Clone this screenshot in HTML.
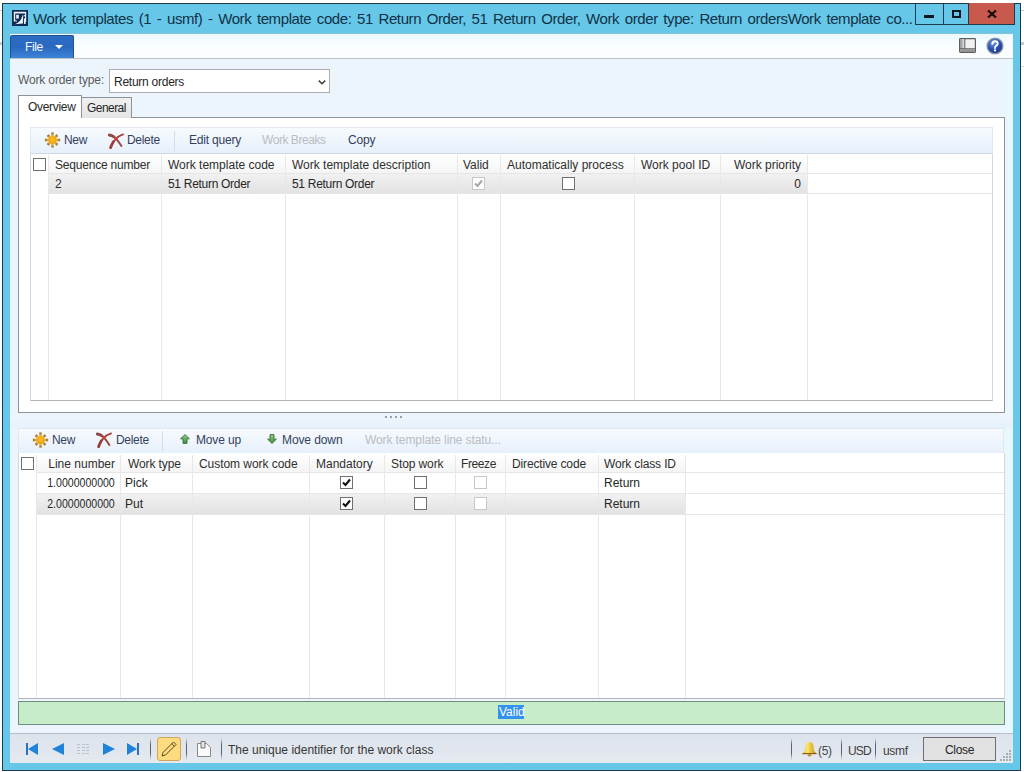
<!DOCTYPE html>
<html><head><meta charset="utf-8">
<style>
*{box-sizing:border-box;margin:0;padding:0}
html,body{width:1024px;height:772px;overflow:hidden;background:#fff;font-family:"Liberation Sans",sans-serif;font-size:12px;color:#1e1e1e}
.a{position:absolute}
.t{position:absolute;white-space:nowrap}
</style></head><body>
<svg width="0" height="0" style="position:absolute"><defs><radialGradient id="sg" cx="0.5" cy="0.45" r="0.6"><stop offset="0" stop-color="#ffc21e"/><stop offset="0.7" stop-color="#f2a818"/><stop offset="1" stop-color="#d89a30"/></radialGradient></defs></svg><div class="a" style="left:0px;top:10px;width:2px;height:1px;background:#c4c4c4"></div><div class="a" style="left:0px;top:42px;width:2px;height:3px;background:#c8c8c8"></div><div class="a" style="left:1021px;top:10px;width:3px;height:1px;background:#c4c4c4"></div><div class="a" style="left:1021px;top:42px;width:3px;height:3px;background:#c8c8c8"></div><div class="a" style="left:1021px;top:66px;width:3px;height:1px;background:#d8d8d8"></div><div class="a" style="left:2px;top:3px;width:1019px;height:768px;background:#67c7e8;border:1px solid #1b3b4c"></div><svg class="a" style="left:12px;top:10px" width="16" height="16" viewBox="0 0 16 16"><rect width="16" height="16" fill="#0b2b55"/><path d="M1.8 1.8H14.2V12H13V3.4H3.2V10.4H5V11.6H1.8Z" fill="#e9f0f9"/><rect x="4.2" y="4.8" width="2.6" height="3.8" fill="#eef4fb"/><path d="M2.8 14.2 Q8.6 12.6 10.6 5.2 L11.2 5.2 L11 13.6Z" fill="#e9f0f9"/><rect x="11.8" y="5" width="1" height="1.4" fill="#e9f0f9"/><rect x="12" y="8.4" width="1.6" height="5.6" fill="#e9f0f9"/></svg><div class="t" style="left:33px;top:10px;font-size:15px;line-height:18px;color:#0f3247;letter-spacing:-0.4px;word-spacing:1.8px">Work templates (1 - usmf) - Work template code: 51 Return Order, 51 Return Order, Work order type: Return ordersWork template co...</div><div class="a" style="left:915px;top:3px;width:29px;height:22px;border:1px solid #1b3b4c;border-top:none"></div><div class="a" style="left:943px;top:3px;width:26px;height:22px;border:1px solid #1b3b4c;border-top:none"></div><div class="a" style="left:968px;top:3px;width:47px;height:22px;background:#c75a4c;border:1px solid #1b3b4c;border-top:none"></div><div class="a" style="left:924px;top:15px;width:10px;height:3px;background:#0b1820"></div><div class="a" style="left:952px;top:10px;width:9px;height:8px;border:2px solid #0b1820"></div><svg class="a" style="left:987px;top:10px" width="10" height="8" viewBox="0 0 10 8"><path d="M1 0.5 L9 7.5 M9 0.5 L1 7.5" stroke="#1a0705" stroke-width="2.2"/></svg><div class="a" style="left:10px;top:33px;width:1003px;height:1px;background:#86c3da"></div><div class="a" style="left:10px;top:34px;width:1003px;height:25px;background:linear-gradient(#ebf9fd,#f9fdff 40%,#fbfdff);border-bottom:1px solid #bfc3c7"></div><div class="a" style="left:10px;top:35px;width:64px;height:23px;background:linear-gradient(#2c6cc3,#2a68c0 50%,#3d83d6);border:1px solid #24538f;border-bottom:none;border-radius:2px 2px 0 0"></div><div class="t" style="left:25px;top:40px;font-size:12px;line-height:14px;color:#f4f8ff;letter-spacing:-0.4px;">File</div><div class="a" style="left:55px;top:45px;width:0;height:0;border-left:4px solid transparent;border-right:4px solid transparent;border-top:4px solid #fff"></div><svg class="a" style="left:959px;top:38px" width="17" height="15" viewBox="0 0 17 15"><defs><linearGradient id="pg" x1="0" y1="0" x2="1" y2="0"><stop offset="0" stop-color="#8a8a8a"/><stop offset="1" stop-color="#eeeeee"/></linearGradient><linearGradient id="pg2" x1="0" y1="0" x2="0" y2="1"><stop offset="0" stop-color="#bdbdbd"/><stop offset="1" stop-color="#7a7a7a"/></linearGradient></defs><rect x="0.6" y="0.6" width="15.8" height="13.8" rx="0.8" fill="#f1f1f1" stroke="#5e5e5e" stroke-width="1.2"/><rect x="1.2" y="1.2" width="4.3" height="9.8" fill="url(#pg)"/><rect x="1.2" y="11" width="14.6" height="2.8" fill="url(#pg2)"/><path d="M5.8 1V11M1 10.8H16" stroke="#5a5a5a" stroke-width="1"/></svg><svg class="a" style="left:986px;top:37px" width="18" height="18" viewBox="0 0 18 18"><defs><radialGradient id="hg" cx="0.4" cy="0.3" r="0.75"><stop offset="0" stop-color="#6f9ae0"/><stop offset="0.55" stop-color="#2a4fae"/><stop offset="1" stop-color="#1a3585"/></radialGradient></defs><circle cx="9" cy="9" r="7.9" fill="url(#hg)" stroke="#8b96a6" stroke-width="1.4"/><path d="M6.3 6.9 Q6.3 4.3 9 4.3 Q11.7 4.3 11.7 6.6 Q11.7 8 10.2 8.8 Q9 9.5 9 11" fill="none" stroke="#fff" stroke-width="1.9" stroke-linecap="round"/><circle cx="9" cy="13.4" r="1.15" fill="#fff"/></svg><div class="a" style="left:10px;top:59px;width:1003px;height:704px;background:linear-gradient(90deg,#e6f7fd,#ecf5fc 4px,#ecf5fc 990px,#e4fafe)"></div><div class="t" style="left:18px;top:73px;font-size:12px;line-height:14px;color:#5b5b5b;letter-spacing:-0.15px;">Work order type:</div><div class="a" style="left:109px;top:69px;width:221px;height:24px;background:#fff;border:1px solid #abadb3"></div><div class="t" style="left:114px;top:75px;font-size:12px;line-height:14px;color:#262626;letter-spacing:-0.25px;">Return orders</div><svg class="a" style="left:317px;top:79px" width="10" height="7" viewBox="0 0 10 7"><path d="M1.8 1.6 L5 4.8 L8.2 1.6" fill="none" stroke="#404040" stroke-width="1.5"/></svg><div class="a" style="left:18px;top:117px;width:987px;height:296px;background:#fff;border:1px solid #8e9296"></div><div class="a" style="left:81px;top:97px;width:51px;height:21px;background:linear-gradient(#f0f0f0,#e4e4e4);border:1px solid #8e9296;border-bottom:none"></div><div class="t" style="left:87px;top:101px;font-size:12px;line-height:14px;color:#262626;letter-spacing:-0.55px;">General</div><div class="a" style="left:18px;top:95px;width:64px;height:23px;background:#fff;border:1px solid #8e9296;border-bottom:none"></div><div class="t" style="left:28px;top:100px;font-size:12px;line-height:14px;color:#262626;letter-spacing:-0.3px;">Overview</div><div class="a" style="left:30px;top:127px;width:963px;height:27px;background:linear-gradient(#f7fafe,#e6f0fb);border:1px solid #e2e8ef;border-bottom:1px solid #cfd9e4"></div><svg class="a" style="left:44px;top:132px" width="17" height="16" viewBox="0 0 17 16"><path d="M11.90 8.00L16.10 8.00M10.90 10.40L13.38 12.88M8.50 11.40L8.50 15.60M6.10 10.40L3.62 12.88M5.10 8.00L0.90 8.00M6.10 5.60L3.62 3.12M8.50 4.60L8.50 0.40M10.90 5.60L13.38 3.12" stroke="#e0a830" stroke-width="2.3"/><path d="M14.30 8.00L16.10 8.00M12.11 11.61L13.38 12.88M8.50 13.80L8.50 15.60M4.89 11.61L3.62 12.88M2.70 8.00L0.90 8.00M4.89 4.39L3.62 3.12M8.50 2.20L8.50 0.40M12.11 4.39L13.38 3.12" stroke="#a08050" stroke-width="2.3"/><circle cx="8.5" cy="8" r="4.0" fill="url(#sg)"/></svg><div class="t" style="left:64px;top:133px;font-size:12px;line-height:14px;color:#343f5e;letter-spacing:-0.3px;">New</div><svg class="a" style="left:108px;top:133px" width="16" height="16" viewBox="0 0 16 16"><g fill="none" stroke-linecap="round"><path d="M1.2 2 Q5.5 3 8 5.6 Q11 9 13.4 13" stroke="#9a4440" stroke-width="1.9"/><path d="M1.2 2 Q4 2.4 6 3.8" stroke="#8e4a48" stroke-width="2.8"/><path d="M15 1.4 Q10.5 3.2 8 5.6 Q4.2 9.6 2.6 14.6" stroke="#a8403a" stroke-width="1.8"/><path d="M5.4 8.6 Q3.6 11.6 2.6 14.6" stroke="#9c3c3a" stroke-width="2.8"/></g><circle cx="8" cy="5.7" r="1.6" fill="#d2402a"/></svg><div class="t" style="left:127px;top:133px;font-size:12px;line-height:14px;color:#343f5e;letter-spacing:-0.3px;">Delete</div><div class="a" style="left:174px;top:131px;width:1px;height:20px;background:#d5dde7"></div><div class="t" style="left:189px;top:133px;font-size:12px;line-height:14px;color:#343f5e;letter-spacing:-0.2px;">Edit query</div><div class="t" style="left:262px;top:133px;font-size:12px;line-height:14px;color:#b9bcc2;letter-spacing:-0.45px;">Work Breaks</div><div class="t" style="left:348px;top:133px;font-size:12px;line-height:14px;color:#343f5e;letter-spacing:-0.2px;">Copy</div><div class="a" style="left:30px;top:154px;width:963px;height:247px;background:#fff;border:1px solid #d6d9dc;border-bottom-color:#b2b5b9;border-top:none"></div><div class="a" style="left:48px;top:155px;width:759px;height:19px;background:linear-gradient(#ffffff,#f4f4f4)"></div><div class="a" style="left:48px;top:174px;width:759px;height:20px;background:linear-gradient(#f1f1f1,#e2e2e2)"></div><div class="a" style="left:48px;top:173px;width:944px;height:1px;background:#e6e6e6"></div><div class="a" style="left:48px;top:193px;width:944px;height:1px;background:#e6e6e6"></div><div class="a" style="left:48px;top:155px;width:1px;height:245px;background:#e8e8e8"></div><div class="a" style="left:161px;top:155px;width:1px;height:245px;background:#e8e8e8"></div><div class="a" style="left:285px;top:155px;width:1px;height:245px;background:#e8e8e8"></div><div class="a" style="left:457px;top:155px;width:1px;height:245px;background:#e8e8e8"></div><div class="a" style="left:500px;top:155px;width:1px;height:245px;background:#e8e8e8"></div><div class="a" style="left:634px;top:155px;width:1px;height:245px;background:#e8e8e8"></div><div class="a" style="left:720px;top:155px;width:1px;height:245px;background:#e8e8e8"></div><div class="a" style="left:807px;top:155px;width:1px;height:245px;background:#e8e8e8"></div><div class="a" style="left:33px;top:158px;width:13px;height:13px;background:#fff;border:1px solid #707070"></div><div class="t" style="left:55px;top:158px;font-size:12px;line-height:14px;color:#2e2e2e;letter-spacing:-0.2px;">Sequence number</div><div class="t" style="left:168px;top:158px;font-size:12px;line-height:14px;color:#2e2e2e;letter-spacing:0px;">Work template code</div><div class="t" style="left:292px;top:158px;font-size:12px;line-height:14px;color:#2e2e2e;letter-spacing:0px;">Work template description</div><div class="t" style="left:463px;top:158px;font-size:12px;line-height:14px;color:#2e2e2e;letter-spacing:0px;">Valid</div><div class="t" style="left:507px;top:158px;font-size:12px;line-height:14px;color:#2e2e2e;letter-spacing:0px;">Automatically process</div><div class="t" style="left:641px;top:158px;font-size:12px;line-height:14px;color:#2e2e2e;letter-spacing:0px;">Work pool ID</div><div class="t" style="right:223px;top:158px;font-size:12px;line-height:14px;color:#2e2e2e;text-align:right;">Work priority</div><div class="t" style="left:55px;top:177px;font-size:12px;line-height:14px;color:#2e2e2e;">2</div><div class="t" style="left:168px;top:177px;font-size:12px;line-height:14px;color:#262626;letter-spacing:-0.3px;">51 Return Order</div><div class="t" style="left:292px;top:177px;font-size:12px;line-height:14px;color:#262626;letter-spacing:-0.3px;">51 Return Order</div><div class="a" style="left:472px;top:177px;width:13px;height:13px;background:#fff;border:1px solid #c8c8c8"></div><svg class="a" style="left:472px;top:177px" width="13" height="13" viewBox="0 0 13 13"><path d="M3 6.5 L5.5 9 L10 3.5" fill="none" stroke="#a8a8a8" stroke-width="2.1"/></svg><div class="a" style="left:562px;top:177px;width:13px;height:13px;background:#fff;border:1px solid #707070"></div><div class="t" style="right:223px;top:177px;font-size:12px;line-height:14px;color:#262626;text-align:right;">0</div><div class="a" style="left:10px;top:413px;width:1003px;height:15px;background:linear-gradient(#eef6fd,#e6f1fb)"></div><div class="a" style="left:385px;top:416px;width:2px;height:2px;background:#9aa0a6"></div><div class="a" style="left:390px;top:416px;width:2px;height:2px;background:#9aa0a6"></div><div class="a" style="left:395px;top:416px;width:2px;height:2px;background:#9aa0a6"></div><div class="a" style="left:400px;top:416px;width:2px;height:2px;background:#9aa0a6"></div><div class="a" style="left:18px;top:428px;width:986px;height:26px;background:linear-gradient(#f7fafe,#e6f0fb);border:1px solid #e2e8ef;border-bottom:1px solid #cfd9e4"></div><svg class="a" style="left:32px;top:432px" width="17" height="16" viewBox="0 0 17 16"><path d="M11.90 8.00L16.10 8.00M10.90 10.40L13.38 12.88M8.50 11.40L8.50 15.60M6.10 10.40L3.62 12.88M5.10 8.00L0.90 8.00M6.10 5.60L3.62 3.12M8.50 4.60L8.50 0.40M10.90 5.60L13.38 3.12" stroke="#e0a830" stroke-width="2.3"/><path d="M14.30 8.00L16.10 8.00M12.11 11.61L13.38 12.88M8.50 13.80L8.50 15.60M4.89 11.61L3.62 12.88M2.70 8.00L0.90 8.00M4.89 4.39L3.62 3.12M8.50 2.20L8.50 0.40M12.11 4.39L13.38 3.12" stroke="#a08050" stroke-width="2.3"/><circle cx="8.5" cy="8" r="4.0" fill="url(#sg)"/></svg><div class="t" style="left:52px;top:433px;font-size:12px;line-height:14px;color:#343f5e;letter-spacing:-0.3px;">New</div><svg class="a" style="left:96px;top:432px" width="16" height="16" viewBox="0 0 16 16"><g fill="none" stroke-linecap="round"><path d="M1.2 2 Q5.5 3 8 5.6 Q11 9 13.4 13" stroke="#9a4440" stroke-width="1.9"/><path d="M1.2 2 Q4 2.4 6 3.8" stroke="#8e4a48" stroke-width="2.8"/><path d="M15 1.4 Q10.5 3.2 8 5.6 Q4.2 9.6 2.6 14.6" stroke="#a8403a" stroke-width="1.8"/><path d="M5.4 8.6 Q3.6 11.6 2.6 14.6" stroke="#9c3c3a" stroke-width="2.8"/></g><circle cx="8" cy="5.7" r="1.6" fill="#d2402a"/></svg><div class="t" style="left:116px;top:433px;font-size:12px;line-height:14px;color:#343f5e;letter-spacing:-0.3px;">Delete</div><div class="a" style="left:162px;top:431px;width:1px;height:20px;background:#d5dde7"></div><svg class="a" style="left:180px;top:434px" width="10" height="10" viewBox="0 0 10 10"><defs><linearGradient id="ag" x1="0" y1="0" x2="0" y2="1"><stop offset="0" stop-color="#8fd080"/><stop offset="1" stop-color="#3f8f3c"/></linearGradient></defs><path d="M5 0.6 L9.4 4.8 H7 V9.4 H3 V4.8 H0.6Z" fill="url(#ag)" stroke="#3d6e3a" stroke-width="0.9" stroke-linejoin="round"/></svg><div class="t" style="left:196px;top:433px;font-size:12px;line-height:14px;color:#343f5e;letter-spacing:-0.15px;">Move up</div><svg class="a" style="left:267px;top:434px" width="10" height="10" viewBox="0 0 10 10"><path d="M5 9.4 L9.4 5.2 H7 V0.6 H3 V5.2 H0.6Z" fill="url(#ag)" stroke="#3d6e3a" stroke-width="0.9" stroke-linejoin="round"/></svg><div class="t" style="left:282px;top:433px;font-size:12px;line-height:14px;color:#343f5e;letter-spacing:-0.1px;">Move down</div><div class="t" style="left:365px;top:433px;font-size:12px;line-height:14px;color:#b9bcc2;letter-spacing:-0.1px;">Work template line statu...</div><div class="a" style="left:18px;top:453px;width:987px;height:246px;background:#fff;border:1px solid #d6d9dc;border-bottom-color:#b2b5b9;border-top:none"></div><div class="a" style="left:36px;top:455px;width:649px;height:17px;background:linear-gradient(#ffffff,#f4f4f4)"></div><div class="a" style="left:36px;top:494px;width:649px;height:20px;background:linear-gradient(#f1f1f1,#e2e2e2)"></div><div class="a" style="left:36px;top:472px;width:968px;height:1px;background:#e6e6e6"></div><div class="a" style="left:36px;top:493px;width:968px;height:1px;background:#e6e6e6"></div><div class="a" style="left:36px;top:514px;width:968px;height:1px;background:#e6e6e6"></div><div class="a" style="left:36px;top:455px;width:1px;height:243px;background:#e8e8e8"></div><div class="a" style="left:120px;top:455px;width:1px;height:243px;background:#e8e8e8"></div><div class="a" style="left:192px;top:455px;width:1px;height:243px;background:#e8e8e8"></div><div class="a" style="left:309px;top:455px;width:1px;height:243px;background:#e8e8e8"></div><div class="a" style="left:384px;top:455px;width:1px;height:243px;background:#e8e8e8"></div><div class="a" style="left:455px;top:455px;width:1px;height:243px;background:#e8e8e8"></div><div class="a" style="left:505px;top:455px;width:1px;height:243px;background:#e8e8e8"></div><div class="a" style="left:598px;top:455px;width:1px;height:243px;background:#e8e8e8"></div><div class="a" style="left:685px;top:455px;width:1px;height:243px;background:#e8e8e8"></div><div class="a" style="left:21px;top:457px;width:13px;height:13px;background:#fff;border:1px solid #707070"></div><div class="t" style="right:909px;top:457px;font-size:12px;line-height:14px;color:#2e2e2e;text-align:right;">Line number</div><div class="t" style="left:128px;top:457px;font-size:12px;line-height:14px;color:#2e2e2e;letter-spacing:-0.1px;">Work type</div><div class="t" style="left:199px;top:457px;font-size:12px;line-height:14px;color:#2e2e2e;letter-spacing:-0.05px;">Custom work code</div><div class="t" style="left:316px;top:457px;font-size:12px;line-height:14px;color:#2e2e2e;">Mandatory</div><div class="t" style="left:391px;top:457px;font-size:12px;line-height:14px;color:#2e2e2e;letter-spacing:-0.1px;">Stop work</div><div class="t" style="left:461px;top:457px;font-size:12px;line-height:14px;color:#2e2e2e;letter-spacing:-0.4px;">Freeze</div><div class="t" style="left:512px;top:457px;font-size:12px;line-height:14px;color:#2e2e2e;letter-spacing:-0.15px;">Directive code</div><div class="t" style="left:604px;top:457px;font-size:12px;line-height:14px;color:#2e2e2e;letter-spacing:-0.15px;">Work class ID</div><div class="t" style="right:909px;top:476px;font-size:12px;line-height:14px;color:#262626;text-align:right;transform:scaleX(0.88);transform-origin:100% 50%">1.0000000000</div><div class="t" style="left:125px;top:476px;font-size:12px;line-height:14px;color:#262626;">Pick</div><div class="a" style="left:340px;top:476px;width:13px;height:13px;background:#fff;border:1px solid #707070"></div><svg class="a" style="left:340px;top:476px" width="13" height="13" viewBox="0 0 13 13"><path d="M3 6.5 L5.5 9 L10 3.5" fill="none" stroke="#111" stroke-width="2.1"/></svg><div class="a" style="left:414px;top:476px;width:13px;height:13px;background:#fff;border:1px solid #707070"></div><div class="a" style="left:474px;top:476px;width:13px;height:13px;background:#fff;border:1px solid #c8c8c8"></div><div class="t" style="left:604px;top:476px;font-size:12px;line-height:14px;color:#262626;">Return</div><div class="t" style="right:909px;top:497px;font-size:12px;line-height:14px;color:#262626;text-align:right;transform:scaleX(0.88);transform-origin:100% 50%">2.0000000000</div><div class="t" style="left:125px;top:497px;font-size:12px;line-height:14px;color:#262626;">Put</div><div class="a" style="left:340px;top:497px;width:13px;height:13px;background:#fff;border:1px solid #707070"></div><svg class="a" style="left:340px;top:497px" width="13" height="13" viewBox="0 0 13 13"><path d="M3 6.5 L5.5 9 L10 3.5" fill="none" stroke="#111" stroke-width="2.1"/></svg><div class="a" style="left:414px;top:497px;width:13px;height:13px;background:#fff;border:1px solid #707070"></div><div class="a" style="left:474px;top:497px;width:13px;height:13px;background:#fff;border:1px solid #c8c8c8"></div><div class="t" style="left:604px;top:497px;font-size:12px;line-height:14px;color:#262626;">Return</div><div class="a" style="left:18px;top:701px;width:987px;height:24px;background:#c7ecca;border:1px solid #6f8c82"></div><div class="a" style="left:498px;top:705px;width:26px;height:14px;background:#3392f0"></div><div class="t" style="left:499px;top:705px;font-size:12px;line-height:14px;color:#ffffff;">Valid</div><div class="a" style="left:10px;top:733px;width:1003px;height:30px;background:linear-gradient(#dde3ec,#e5e9f0);border-top:1px solid #b9bfc7"></div><div class="a" style="left:26px;top:743px;width:2px;height:12px;background:#2d6fc1"></div><svg class="a" style="left:28px;top:743px" width="10" height="12" viewBox="0 0 10 12"><path d="M0 6.0 L10 0 V12Z" fill="#1f82db"/></svg><svg class="a" style="left:52px;top:743px" width="12" height="12" viewBox="0 0 12 12"><path d="M0 6.0 L12 0 V12Z" fill="#1f82db"/></svg><div class="a" style="left:77px;top:744px;width:3px;height:1px;background:#b4bfd0"></div><div class="a" style="left:82px;top:744px;width:3px;height:1px;background:#b4bfd0"></div><div class="a" style="left:86px;top:744px;width:3px;height:1px;background:#b4bfd0"></div><div class="a" style="left:77px;top:747px;width:3px;height:1px;background:#b4bfd0"></div><div class="a" style="left:82px;top:747px;width:3px;height:1px;background:#b4bfd0"></div><div class="a" style="left:86px;top:747px;width:3px;height:1px;background:#b4bfd0"></div><div class="a" style="left:77px;top:750px;width:3px;height:1px;background:#b4bfd0"></div><div class="a" style="left:82px;top:750px;width:3px;height:1px;background:#b4bfd0"></div><div class="a" style="left:86px;top:750px;width:3px;height:1px;background:#b4bfd0"></div><div class="a" style="left:77px;top:753px;width:3px;height:1px;background:#b4bfd0"></div><div class="a" style="left:82px;top:753px;width:3px;height:1px;background:#b4bfd0"></div><div class="a" style="left:86px;top:753px;width:3px;height:1px;background:#b4bfd0"></div><svg class="a" style="left:103px;top:743px" width="12" height="12" viewBox="0 0 12 12"><path d="M12 6.0 L0 0 V12Z" fill="#1f82db"/></svg><svg class="a" style="left:127px;top:743px" width="10" height="12" viewBox="0 0 10 12"><path d="M10 6.0 L0 0 V12Z" fill="#1f82db"/></svg><div class="a" style="left:137px;top:743px;width:2px;height:12px;background:#2d6fc1"></div><div class="a" style="left:150px;top:738px;width:1px;height:22px;background:linear-gradient(rgba(60,70,90,0),#5a6478 30%,#5a6478 70%,rgba(60,70,90,0))"></div><div class="a" style="left:157px;top:737px;width:24px;height:24px;background:#fddb7e;border:1px solid #cfa75a;border-radius:3px"></div><svg class="a" style="left:159px;top:739px" width="20" height="20" viewBox="0 0 20 20"><path d="M3 17 L4 13.5 L14.5 3 L17 5.5 L6.5 16Z" fill="none" stroke="#5a4824" stroke-width="1" stroke-linejoin="round"/><path d="M12.8 4.7 L15.3 7.2" stroke="#5a4824" stroke-width="1"/></svg><div class="a" style="left:186px;top:738px;width:1px;height:22px;background:linear-gradient(rgba(60,70,90,0),#5a6478 30%,#5a6478 70%,rgba(60,70,90,0))"></div><svg class="a" style="left:196px;top:740px" width="16" height="18" viewBox="0 0 16 18"><path d="M1.5 3.5 H10.5 L14.5 7.5 V16.5 H1.5Z" fill="#fbfbfb" stroke="#8a8a8a" stroke-width="1"/><path d="M5 1.5 H9 V8 H5Z" fill="#e4e4e4" stroke="#777" stroke-width="1"/></svg><div class="a" style="left:221px;top:738px;width:1px;height:22px;background:linear-gradient(rgba(60,70,90,0),#5a6478 30%,#5a6478 70%,rgba(60,70,90,0))"></div><div class="t" style="left:228px;top:743px;font-size:12px;line-height:14px;color:#363636;">The unique identifier for the work class</div><div class="a" style="left:791px;top:738px;width:1px;height:22px;background:linear-gradient(rgba(60,70,90,0),#5a6478 30%,#5a6478 70%,rgba(60,70,90,0))"></div><svg class="a" style="left:801px;top:741px" width="17" height="16" viewBox="0 0 17 16"><defs><linearGradient id="bg1" x1="0" y1="0" x2="1" y2="0"><stop offset="0" stop-color="#e8c030"/><stop offset="0.35" stop-color="#fbe46a"/><stop offset="0.75" stop-color="#e0b02a"/><stop offset="1" stop-color="#a87418"/></linearGradient></defs><path d="M8.5 1 C5.2 1 4.4 4 4.4 7 C4.4 9.6 3.4 11 1.6 12.4 H15.4 C13.6 11 12.6 9.6 12.6 7 C12.6 4 11.8 1 8.5 1Z" fill="url(#bg1)"/><path d="M1.4 12.6 H15.6" stroke="#8a5a18" stroke-width="1.2"/><ellipse cx="8.5" cy="14.2" rx="1.8" ry="1.2" fill="#c99020"/></svg><div class="t" style="left:818px;top:744px;font-size:12px;line-height:14px;color:#484848;letter-spacing:-0.3px;">(5)</div><div class="a" style="left:841px;top:738px;width:1px;height:22px;background:linear-gradient(rgba(60,70,90,0),#5a6478 30%,#5a6478 70%,rgba(60,70,90,0))"></div><div class="t" style="left:848px;top:744px;font-size:12px;line-height:14px;color:#404040;letter-spacing:-0.8px;">USD</div><div class="a" style="left:875px;top:738px;width:1px;height:22px;background:linear-gradient(rgba(60,70,90,0),#5a6478 30%,#5a6478 70%,rgba(60,70,90,0))"></div><div class="t" style="left:883px;top:744px;font-size:12px;line-height:14px;color:#404040;letter-spacing:-0.3px;">usmf</div><div class="a" style="left:923px;top:737px;width:73px;height:24px;background:#e1e1e1;border:1px solid #6f6f6f"></div><div class="t" style="left:945px;top:743px;font-size:12px;line-height:14px;color:#262626;letter-spacing:-0.3px;">Close</div><div class="a" style="left:1009px;top:750px;width:2px;height:2px;background:#a8aeb6"></div><div class="a" style="left:1006px;top:753px;width:2px;height:2px;background:#a8aeb6"></div><div class="a" style="left:1009px;top:753px;width:2px;height:2px;background:#a8aeb6"></div><div class="a" style="left:1003px;top:756px;width:2px;height:2px;background:#a8aeb6"></div><div class="a" style="left:1006px;top:756px;width:2px;height:2px;background:#a8aeb6"></div><div class="a" style="left:1009px;top:756px;width:2px;height:2px;background:#a8aeb6"></div><div class="a" style="left:1000px;top:759px;width:2px;height:2px;background:#a8aeb6"></div><div class="a" style="left:1003px;top:759px;width:2px;height:2px;background:#a8aeb6"></div><div class="a" style="left:1006px;top:759px;width:2px;height:2px;background:#a8aeb6"></div><div class="a" style="left:1009px;top:759px;width:2px;height:2px;background:#a8aeb6"></div>
</body></html>
